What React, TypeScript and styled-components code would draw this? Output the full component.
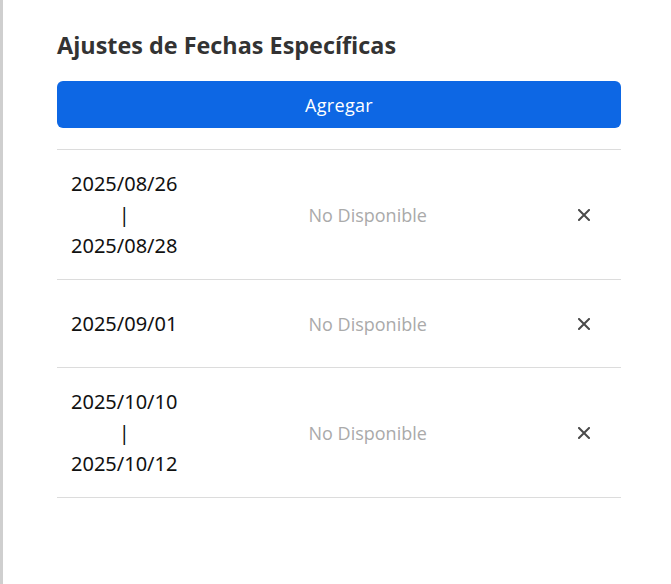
import styled, { createGlobalStyle } from "styled-components";

const GlobalStyle = createGlobalStyle`
	html, body {
		margin: 0;
		padding: 0;
		background: #ffffff;
	}
	body {
		font-family: "Open Sans", "Noto Sans", sans-serif;
	}
`;

const Page = styled.div`
	min-height: 584px;
	border-left: 3px solid #cfcfcf;
	box-sizing: border-box;
	padding: 30px 50px 0 54px;
`;

const Title = styled.h2`
	margin: 0 0 21px;
	font-size: 23.4px;
	line-height: 30px;
	font-weight: 700;
	color: #333333;
`;

const AddButton = styled.button`
	display: block;
	width: 100%;
	height: 47px;
	border: none;
	border-radius: 6px;
	background: #0d67e4;
	color: #ffffff;
	font-family: "Open Sans", sans-serif;
	font-size: 18px;
	letter-spacing: 0.3px;
	cursor: pointer;
	margin-bottom: 21px;
`;

const List = styled.div`
	border-top: 1px solid #dcdcdc;
`;

const Row = styled.div`
	display: flex;
	align-items: center;
	justify-content: space-between;
	padding: 18px 13px 18px 14px;
	border-bottom: 1px solid #dcdcdc;
`;

const Dates = styled.div`
	display: flex;
	flex-direction: column;
	align-items: center;
	font-family: "Noto Sans", "Open Sans", sans-serif;
	font-size: 20px;
	line-height: 31px;
	color: #111111;
`;

const Status = styled.span`
	font-size: 18px;
	color: #aaaaaa;
	margin-left: -2px;
`;

const RemoveButton = styled.button`
	width: 48px;
	height: 51px;
	border: none;
	background: transparent;
	display: flex;
	align-items: center;
	justify-content: center;
	cursor: pointer;
	padding: 0;
`;

const CloseIcon = () => (
	<svg width="12" height="12" viewBox="0 0 12 12">
		<path d="M1 1L11 11M11 1L1 11" stroke="#4a4a4a" strokeWidth="2" strokeLinecap="square" />
	</svg>
);

const entries = [
	{ from: "2025/08/26", to: "2025/08/28" },
	{ from: "2025/09/01" },
	{ from: "2025/10/10", to: "2025/10/12" },
];

function App() {
	return (
		<>
			<GlobalStyle />
			<Page>
				<Title>Ajustes de Fechas Específicas</Title>
				<AddButton>Agregar</AddButton>
				<List>
					{entries.map((e) => (
						<Row key={e.from}>
							<Dates>
								<span>{e.from}</span>
								{e.to && (
									<>
										<span>|</span>
										<span>{e.to}</span>
									</>
								)}
							</Dates>
							<Status>No Disponible</Status>
							<RemoveButton aria-label="Eliminar">
								<CloseIcon />
							</RemoveButton>
						</Row>
					))}
				</List>
			</Page>
		</>
	);
}

export default App;
